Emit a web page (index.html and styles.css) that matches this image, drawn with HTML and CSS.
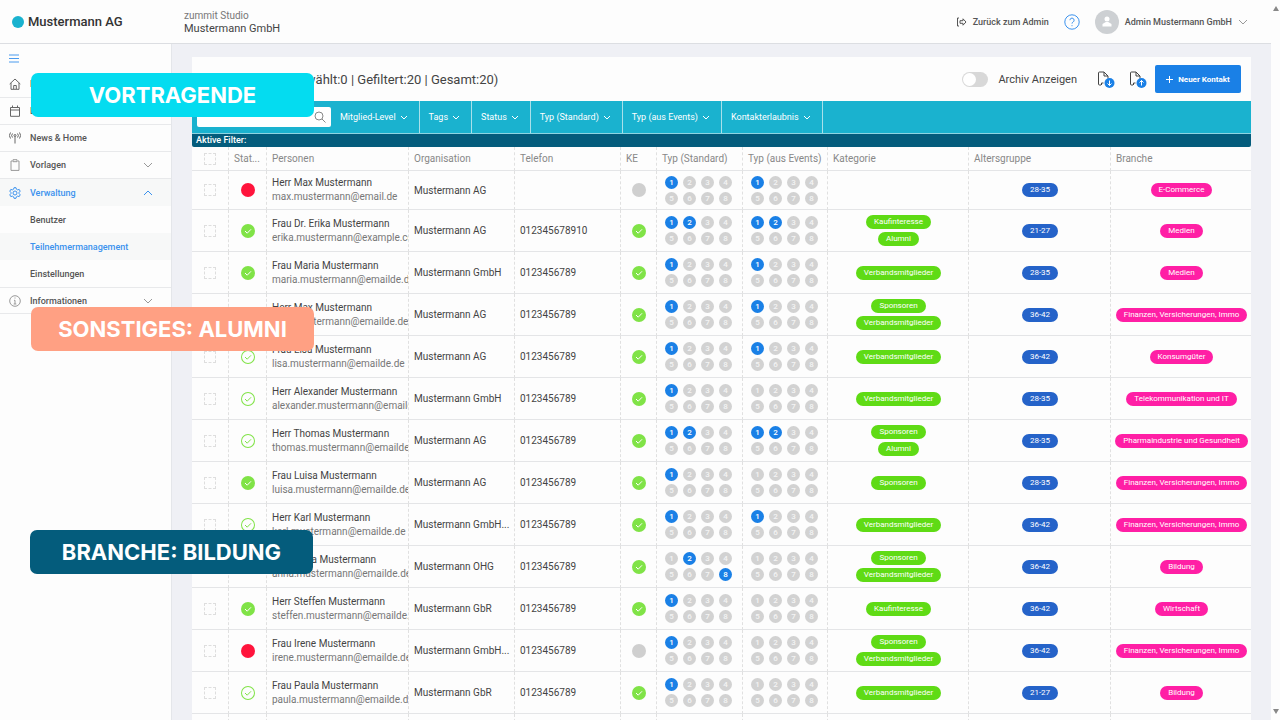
FILE: index.html
```
<!DOCTYPE html>
<html lang="de">
<head>
    <meta charset="UTF-8">
    <meta name="viewport" content="width=device-width, initial-scale=1.0">
    <title>Teilnehmermanagement</title>
    <link rel="stylesheet" href="styles.css">
</head>
<body>
    <div class="app">
        <header class="topbar">
            <a href="#" class="brand"><span class="brand-dot"></span>Mustermann AG</a>
            <div class="client">
                <div class="client-app">zummit Studio</div>
                <div>Mustermann GmbH</div>
            </div>
            <a href="#" class="back-link">
                <svg width="11" height="10" viewBox="0 0 11 10"><path d="M3 1H1.500v8H3M4 3.700h3V1.800L10 5 7 8.200V6.300H4z"/></svg>
                Zurück zum Admin
            </a>
            <button class="help" aria-label="Hilfe">
                <svg width="16" height="16" viewBox="0 0 16 16"><circle cx="8" cy="8" r="7.200"/><path d="M5.900 6.200a2.100 2.100 0 1 1 3.200 1.800C8.300 8.500 8 8.800 8 9.600M8 11.200v1"/></svg>
            </button>
            <button class="user">
                <span class="avatar"><svg width="10" height="11" viewBox="0 0 10 11"><circle cx="5" cy="3" r="2.500"/><path d="M.500 10.500V8L3.800 6h2.400L9.500 8v2.500z"/></svg></span>
                Admin Mustermann GmbH
                <svg class="chevron" viewBox="0 0 10 6"><path d="M1 1l4 4 4-4"/></svg>
            </button>
        </header>

        <nav class="sidebar">
            <button class="burger" aria-label="Menü"><svg width="10" height="9" viewBox="0 0 10 9"><path d="M0 1h10M0 4.500h10M0 8h10"/></svg></button>
            <a href="#" class="nav-item">
                <svg class="nav-icon" viewBox="0 0 12 12"><path d="M.700 6L6 1l5.300 5M2 5v6.300h8V5M4.700 11V7.500h2.600V11"/></svg>
                Home
            </a>
            <a href="#" class="nav-item">
                <svg class="nav-icon" viewBox="0 0 12 12"><path d="M1.500 2.500h9v8.800h-9zM1.500 5h9M3.500.500v2.300M8.500.500v2.300"/></svg>
                Events
            </a>
            <a href="#" class="nav-item">
                <svg class="nav-icon" viewBox="0 0 12 12"><circle cx="6" cy="3.500" r="1"/><path d="M6 4.500v7M3.500 1.500a3 3 0 0 0 0 4M8.500 1.500a3 3 0 0 1 0 4M1.500.500a5 5 0 0 0 0 6M10.500.500a5 5 0 0 1 0 6"/></svg>
                News &amp; Home
            </a>
            <a href="#" class="nav-item">
                <svg class="nav-icon muted" viewBox="0 0 12 12"><path d="M3.500 2H2v9.400h8V2H8.500M4 .700h4v2H4z"/></svg>
                Vorlagen
                <svg class="chevron" viewBox="0 0 10 6"><path d="M1 1l4 4 4-4"/></svg>
            </a>
            <a href="#" class="nav-item open">
                <svg class="nav-icon" viewBox="0 0 12 12"><path d="M5 .700h2l.4 1.500 1.300.7 1.500-.5 1 1.800-1.100 1.100v1.400l1.100 1.100-1 1.800-1.500-.5-1.300.7L7 11.300H5l-.4-1.500-1.300-.7-1.500.5-1-1.800 1.100-1.100V5.300L.8 4.200l1-1.800 1.500.5 1.300-.7z"/><circle cx="6" cy="6" r="2"/></svg>
                Verwaltung
                <svg class="chevron" viewBox="0 0 10 6"><path d="M1 5l4-4 4 4"/></svg>
            </a>
            <a href="#" class="nav-item sub">Benutzer</a>
            <a href="#" class="nav-item sub active">Teilnehmermanagement</a>
            <a href="#" class="nav-item sub">Einstellungen</a>
            <a href="#" class="nav-item last">
                <svg class="nav-icon muted" viewBox="0 0 12 12"><circle cx="6" cy="6" r="5.300"/><path d="M5 5.300h1V9M4.700 9h2.600M5.500 3h1"/></svg>
                Informationen
                <svg class="chevron" viewBox="0 0 10 6"><path d="M1 1l4 4 4-4"/></svg>
            </a>
        </nav>

        <main class="content">
            <section class="panel">
                <div class="panel-head">
                    <h1>Kontakte (Ausgewählt:0 | Gefiltert:20 | Gesamt:20)</h1>
                    <label class="archive"><input type="checkbox" class="switch">Archiv Anzeigen</label>
                    <button class="file-btn" aria-label="Importieren">
                        <svg width="18" height="19" viewBox="0 0 18 19"><path class="sheet" d="M4 15H2.500a1 1 0 0 1-1-1V3a1 1 0 0 1 1-1H7l4 4v2.500M7 2v4h4M4.500 15v-2h2"/><circle cx="12.500" cy="13" r="5"/><path class="arrow" d="M12.500 10.500v5M10.500 13.500l2 2 2-2"/></svg>
                    </button>
                    <button class="file-btn" aria-label="Exportieren">
                        <svg width="18" height="19" viewBox="0 0 18 19"><path class="sheet" d="M4 15H2.500a1 1 0 0 1-1-1V3a1 1 0 0 1 1-1H7l4 4v2.500M7 2v4h4M4.500 15v-2h2"/><circle cx="12.500" cy="13" r="5"/><path class="arrow" d="M12.500 15.500v-5M10.500 12.500l2-2 2 2"/></svg>
                    </button>
                    <button class="new-contact"><svg width="7" height="7" viewBox="0 0 7 7"><path d="M3.500 0v7M0 3.500h7"/></svg>Neuer Kontakt</button>
                </div>
                <div class="filters">
                    <div class="search">
                        <input type="text" aria-label="Suche">
                        <svg width="12" height="12" viewBox="0 0 12 12"><circle cx="5" cy="5" r="4"/><path d="M8 8l3.500 3.500"/></svg>
                    </div>
                    <button>Mitglied-Level <svg viewBox="0 0 8 5"><path d="M1 1l3 3 3-3"/></svg></button>
                    <button>Tags <svg viewBox="0 0 8 5"><path d="M1 1l3 3 3-3"/></svg></button>
                    <button>Status <svg viewBox="0 0 8 5"><path d="M1 1l3 3 3-3"/></svg></button>
                    <button>Typ (Standard) <svg viewBox="0 0 8 5"><path d="M1 1l3 3 3-3"/></svg></button>
                    <button>Typ (aus Events) <svg viewBox="0 0 8 5"><path d="M1 1l3 3 3-3"/></svg></button>
                    <button>Kontakterlaubnis <svg viewBox="0 0 8 5"><path d="M1 1l3 3 3-3"/></svg></button>
                </div>
                <div class="active-filters">Aktive Filter:</div>
                <table>
                    <colgroup>
                        <col class="c-check"><col class="c-status"><col class="c-person"><col class="c-org"><col class="c-org"><col class="c-ke">
                        <col class="c-type"><col class="c-events"><col class="c-tags"><col class="c-person"><col class="c-industry">
                    </colgroup>
                    <thead>
                        <tr>
                            <th class="center"><input type="checkbox" aria-label="Alle auswählen"></th>
                            <th>Stat...</th>
                            <th>Personen</th>
                            <th>Organisation</th>
                            <th>Telefon</th>
                            <th>KE</th>
                            <th>Typ (Standard)</th>
                            <th>Typ (aus Events)</th>
                            <th>Kategorie</th>
                            <th>Altersgruppe</th>
                            <th>Branche</th>
                        </tr>
                    </thead>
                    <tbody id="contacts"></tbody>
                </table>
            </section>
        </main>

        <div class="scrollbar">
            <span class="scroll-up"></span>
            <span class="scroll-down"></span>
        </div>
    </div>

    <div class="callout speaker">VORTRAGENDE</div>
    <div class="callout alumni">SONSTIGES: ALUMNI</div>
    <div class="callout education">BRANCHE: BILDUNG</div>

    <script>
        // status, name, email, organisation, phone, ke, types, event types, categories, age, industry
        const contacts = [
            ['off', 'Herr Max', 'max.mustermann@email.de', 'AG', '', 0, [1], [1], [], '28-35', 'E-Commerce'],
            ['full', 'Frau Dr. Erika', 'erika.mustermann@example.com', 'AG', '012345678910', 1, [1, 2], [1, 2], ['Kaufinteresse', 'Alumni'], '21-27', 'Medien'],
            ['full', 'Frau Maria', 'maria.mustermann@emailde.de', 'GmbH', '0123456789', 1, [1], [1], ['Verbandsmitglieder'], '28-35', 'Medien'],
            ['full', 'Herr Max', 'max.mustermann@emailde.de', 'AG', '0123456789', 1, [1], [1], ['Sponsoren', 'Verbandsmitglieder'], '36-42', 'Finanzen, Versicherungen, Immo'],
            ['line', 'Frau Lisa', 'lisa.mustermann@emailde.de', 'AG', '0123456789', 1, [1], [1], ['Verbandsmitglieder'], '36-42', 'Konsumgüter'],
            ['line', 'Herr Alexander', 'alexander.mustermann@emailde.de', 'GmbH', '0123456789', 1, [1], [], ['Verbandsmitglieder'], '28-35', 'Telekommunikation und IT'],
            ['line', 'Herr Thomas', 'thomas.mustermann@emailde.de', 'AG', '0123456789', 1, [1, 2], [1, 2], ['Sponsoren', 'Alumni'], '28-35', 'Pharmaindustrie und Gesundheit'],
            ['full', 'Frau Luisa', 'luisa.mustermann@emailde.de', 'AG', '0123456789', 1, [1], [], ['Sponsoren'], '28-35', 'Finanzen, Versicherungen, Immo'],
            ['line', 'Herr Karl', 'karl.mustermann@emailde.de', 'GmbH...', '0123456789', 1, [1], [1], ['Verbandsmitglieder'], '36-42', 'Finanzen, Versicherungen, Immo'],
            ['full', 'Frau Anna', 'anna.mustermann@emailde.de', 'OHG', '0123456789', 1, [2, 8], [], ['Sponsoren', 'Verbandsmitglieder'], '36-42', 'Bildung'],
            ['full', 'Herr Steffen', 'steffen.mustermann@emailde.de', 'GbR', '0123456789', 1, [1], [], ['Kaufinteresse'], '36-42', 'Wirtschaft'],
            ['off', 'Frau Irene', 'irene.mustermann@emailde.de', 'GmbH...', '0123456789', 0, [1], [], ['Sponsoren', 'Verbandsmitglieder'], '36-42', 'Finanzen, Versicherungen, Immo'],
            ['line', 'Frau Paula', 'paula.mustermann@emailde.de', 'GbR', '0123456789', 1, [1], [], ['Verbandsmitglieder'], '21-27', 'Bildung'],
            ['full', 'Herr Paul', 'paul.mustermann@emailde.de', 'AG', '0123456789', 1, [1], [], ['Sponsoren'], '28-35', 'Wirtschaft']
        ];

        const check = '<svg viewBox="0 0 14 14"><path d="M4 7l2.200 2.200L10 5.300"/></svg>';

        function dots(active) {
            return '<div class="dots">' + [1, 2, 3, 4, 5, 6, 7, 8].map(n =>
                `<span class="${active.includes(n) ? 'on' : ''}">${n}</span>`).join('') + '</div>';
        }

        function tags(list, color) {
            return '<div class="tags">' + list.map(t => `<span class="tag ${color}">${t}</span>`).join('') + '</div>';
        }

        document.getElementById('contacts').innerHTML = contacts.map(([status, name, mail, org, phone, ke, types, events, categories, age, industry]) => `
            <tr>
                <td class="center"><input type="checkbox" aria-label="${name} Mustermann"></td>
                <td class="center"><span class="state ${status}">${status === 'off' ? '' : check}</span></td>
                <td class="person"><div>${name} Mustermann</div><div class="mail">${mail}</div></td>
                <td>Mustermann ${org}</td>
                <td>${phone}</td>
                <td class="center"><span class="state ${ke ? 'full' : 'none'}">${ke ? check : ''}</span></td>
                <td>${dots(types)}</td>
                <td>${dots(events)}</td>
                <td>${tags(categories, 'green')}</td>
                <td>${tags([age], 'blue')}</td>
                <td>${tags([industry], 'pink')}</td>
            </tr>`).join('');
    </script>
</body>
</html>
```
FILE: styles.css
```
* {
    margin: 0;
    padding: 0;
    box-sizing: border-box;
}

body {
    font-family: Roboto, sans-serif;
    font-size: 10px;
    color: #444;
    background: #fdfdfd;
    overflow: hidden;
}

a {
    color: inherit;
    text-decoration: none;
}

button {
    font: inherit;
    color: inherit;
    background: none;
    border: none;
    cursor: pointer;
}

svg {
    flex: none;
    fill: none;
    stroke: currentColor;
}

.app {
    height: 100vh;
    display: grid;
    grid-template: 44px 1fr / 172px 1fr 9px;
}

.topbar {
    grid-column: 1 / 3;
    display: flex;
    align-items: center;
    padding-right: 23px;
    border-bottom: 1px solid #dcdee2;
}

.brand {
    width: 184px;
    display: flex;
    align-items: center;
    gap: 4px;
    padding-left: 12px;
    font-size: 13px;
    font-weight: 500;
    color: #333;
}

.brand-dot {
    width: 12px;
    height: 12px;
    border-radius: 50%;
    background: #1ab2cf;
}

.client {
    flex: 1;
    font-size: 11px;
    line-height: 13px;
}

.client-app {
    font-size: 10px;
    color: #777;
}

.back-link {
    display: flex;
    align-items: center;
    gap: 6px;
    font-size: 9px;
    font-weight: 500;
    color: #555;
}

.help {
    display: flex;
    margin: 0 15px;
    color: #3b92ee;
}

.user {
    display: flex;
    align-items: center;
    gap: 6px;
    font-size: 9px;
    font-weight: 500;
    color: #555;
}

.avatar {
    width: 24px;
    height: 24px;
    display: flex;
    align-items: center;
    justify-content: center;
    border-radius: 50%;
    background: #cdd0d3;
}

.avatar svg {
    fill: #fff;
    stroke: none;
}

.chevron {
    width: 10px;
    height: 6px;
    color: #999;
}

.sidebar {
    grid-column: 1;
    border-right: 1px solid #e4e6ea;
    font-size: 9px;
    font-weight: 500;
    color: #555;
}

.burger {
    height: 27px;
    display: flex;
    align-items: center;
    padding: 2px 9px 0;
    color: #4b9bee;
}

.nav-item {
    height: 27px;
    display: flex;
    align-items: center;
    gap: 9px;
    padding: 0 18px 0 9px;
    border-bottom: 1px solid #e8e9eb;
}

.nav-icon {
    width: 12px;
    height: 12px;
    color: #666;
}

.nav-icon.muted {
    color: #999;
}

.nav-item .chevron {
    margin-left: auto;
}

.nav-item.open {
    border-bottom: none;
    background: #f7f8f8;
    color: #3b92ee;
}

.nav-item.open svg {
    color: #3b92ee;
}

.nav-item.sub {
    padding-left: 30px;
    border-bottom: none;
}

.nav-item.active {
    background: #f7f8f8;
    color: #3b92ee;
}

.nav-item.last {
    border-top: 1px solid #e8e9eb;
}

.content {
    min-width: 0;
    padding: 13px 20px 0;
    background: #eff0f5;
    overflow: hidden;
}

.panel {
    background: #fdfdfd;
}

.panel-head {
    height: 44px;
    display: flex;
    align-items: center;
    padding-right: 10px;
}

.panel-head h1 {
    flex: 1;
    padding-left: 18px;
    font-size: 13px;
    font-weight: 400;
}

.archive {
    display: flex;
    align-items: center;
    gap: 10px;
    margin-right: 20px;
    font-size: 11px;
}

.switch {
    appearance: none;
    width: 26px;
    height: 15px;
    border-radius: 8px;
    background: #d8d8d8;
}

.switch::before {
    content: '';
    display: block;
    width: 13px;
    height: 13px;
    margin: 1px;
    border-radius: 50%;
    background: #fff;
}

.file-btn {
    margin-right: 14px;
}

.file-btn + .new-contact {
    margin-left: -6px;
}

.file-btn svg {
    display: block;
}

.file-btn circle {
    fill: #1a80e6;
    stroke: none;
}

.file-btn .arrow {
    stroke: #fff;
}

.new-contact {
    width: 86px;
    height: 28px;
    display: flex;
    align-items: center;
    justify-content: center;
    gap: 5px;
    border-radius: 2px;
    background: #1a80e6;
    color: #fff;
    font-size: 8px;
    font-weight: 700;
}

.filters {
    height: 33px;
    display: flex;
    background: #1ab2cf;
    border-bottom: 1px solid #8ed5e2;
}

.filters button {
    display: flex;
    align-items: center;
    gap: 4px;
    padding: 0 11px 0 9px;
    border-right: 1px solid #a9e0ea;
    color: #fff;
    font-size: 9px;
}

.filters button svg {
    width: 8px;
    height: 5px;
}

.search {
    width: 134px;
    display: flex;
    align-items: center;
    margin: 6px 0 6px 5px;
    padding-right: 5px;
    border-radius: 2px;
    background: #fff;
    color: #888;
}

.search input {
    flex: 1;
    min-width: 0;
    border: none;
    outline: none;
    background: none;
}

.active-filters {
    height: 13px;
    padding-left: 4px;
    border-radius: 0 0 2px 2px;
    background: #045c7c;
    color: #fff;
    font-size: 9px;
    line-height: 12px;
    font-weight: 500;
}

table {
    width: 100%;
    table-layout: fixed;
    border-collapse: separate;
    border-spacing: 0;
}

.c-check { width: 37px; }
.c-status { width: 38px; }
.c-person { width: 142px; }
.c-org { width: 106px; }
.c-ke { width: 36px; }
.c-type { width: 86px; }
.c-events { width: 85px; }
.c-tags { width: 141px; }
.c-industry { width: 140px; }

th,
td {
    padding: 0 0 0 5px;
    border-right: 1px dashed #e0e0e0;
    border-bottom: 1px solid #e4e5e7;
    text-align: left;
    white-space: nowrap;
    overflow: hidden;
}

th:last-child,
td:last-child {
    border-right: none;
}

th {
    height: 24px;
    font-weight: 400;
    color: #888;
}

td {
    height: 42px;
}

tbody tr:first-child td {
    height: 39px;
}

.center {
    padding: 0;
    text-align: center;
}

td input,
th input {
    appearance: none;
    width: 12px;
    height: 12px;
    border: 1px dashed #dedede;
    vertical-align: middle;
}

.person {
    line-height: 14px;
}

.mail {
    color: #777;
}

.state {
    display: inline-block;
    width: 14px;
    height: 14px;
    border-radius: 50%;
    vertical-align: middle;
    color: #fff;
}

.state svg {
    display: block;
}

.state.full { background: #80e347; }
.state.off { background: #ff143c; }
.state.none { background: #cfcfcf; }

.state.line {
    box-shadow: inset 0 0 0 1px #80e347;
    color: #80e347;
}

.dots {
    display: grid;
    grid-template-columns: repeat(4, 13px);
    gap: 3px 5px;
    padding-left: 3px;
}

.dots span {
    height: 13px;
    border-radius: 50%;
    background: #d2d2d2;
    color: #f4f4f4;
    font-size: 8px;
    line-height: 13px;
    font-weight: 500;
    text-align: center;
}

.dots .on {
    background: #1a80e6;
    color: #fff;
}

.tags {
    display: flex;
    flex-direction: column;
    align-items: center;
    gap: 3px;
    padding-right: 4px;
}

.tag {
    padding: 0 8px;
    border-radius: 7px;
    color: #fff;
    font-size: 8px;
    line-height: 14px;
}

.green { background: #5fdb15; }
.blue { background: #2563c9; }
.pink { background: #ff1fa5; }

.scrollbar {
    grid-column: 3;
    grid-row: 1 / 3;
    display: flex;
    flex-direction: column;
    justify-content: space-between;
    align-items: center;
    padding: 6px 0;
}

.scroll-up,
.scroll-down {
    border: 3px solid transparent;
}

.scroll-up {
    border-top: none;
    border-bottom: 5px solid #888;
}

.scroll-down {
    border-bottom: none;
    border-top: 5px solid #888;
}

.callout {
    position: absolute;
    left: 31px;
    width: 283px;
    height: 44px;
    border-radius: 7px;
    color: #fff;
    font-family: Inter, sans-serif;
    font-size: 22px;
    line-height: 44px;
    font-weight: 700;
    text-align: center;
}

.speaker {
    top: 73px;
    background: #04dcf0;
}

.alumni {
    top: 307px;
    background: #ffa083;
}

.education {
    top: 530px;
    left: 30px;
    background: #045c7c;
}
```
